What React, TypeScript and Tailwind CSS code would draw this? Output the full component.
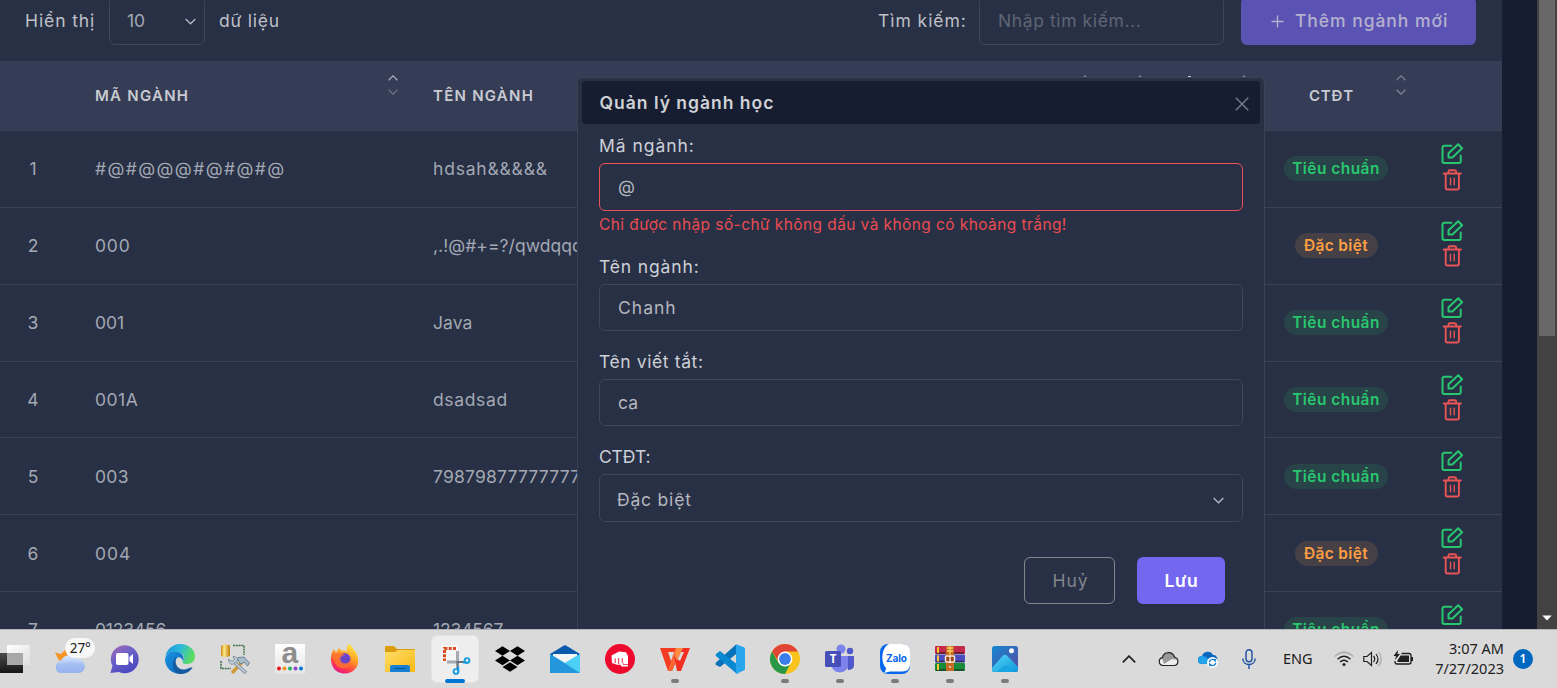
import type { ReactNode } from "react";
import { SiDropbox } from "react-icons/si";

type Program = "standard" | "special";

const rows: { code: string; name: string; program: Program; spacing: string; nameSpacing: string }[] = [
  { code: "#@#@@@#@#@#@", name: "hdsah&&&&&", program: "standard", spacing: "tracking-[1.4px]", nameSpacing: "tracking-[0.8px]" },
  { code: "000", name: ",.!@#+=?/qwdqqdwq", program: "special", spacing: "tracking-[0.8px]", nameSpacing: "tracking-[0.05px]" },
  { code: "001", name: "Java", program: "standard", spacing: "tracking-[0px]", nameSpacing: "tracking-[0.1px]" },
  { code: "001A", name: "dsadsad", program: "standard", spacing: "tracking-[0.5px]", nameSpacing: "tracking-[0.650px]" },
  { code: "003", name: "79879877777777", program: "standard", spacing: "tracking-[0.3px]", nameSpacing: "tracking-[0.200px]" },
  { code: "004", name: "", program: "special", spacing: "tracking-[0.9px]", nameSpacing: "tracking-normal" },
  { code: "0123456", name: "1234567", program: "standard", spacing: "tracking-[-0.200px]", nameSpacing: "tracking-[-0.150px]" },
];

const Chevron = ({ up = false, className = "" }: { up?: boolean; className?: string }) => (
  <svg viewBox="0 0 10 6" className={className} fill="none" stroke="currentColor" strokeWidth="1.2">
    <path d={up ? "M.6 5.2 5 .9l4.400 4.300" : "M.6.8 5 5.100 9.400.8"} />
  </svg>
);

const Sort = ({ top = "text-[#7d8190]", bottom = "text-[#858997]" }: { top?: string; bottom?: string }) => (
  <span className="flex w-[10px] shrink-0 flex-col gap-2 self-start pt-[14px]">
    <Chevron up className={"h-[6px] w-[10px] " + top} />
    <Chevron className={"h-[6px] w-[10px] " + bottom} />
  </span>
);

const EditIcon = () => (
  <svg viewBox="0 0 24 24" className="size-6" fill="none" stroke="#28c76f" strokeWidth="2" strokeLinejoin="round" strokeLinecap="round">
    <path d="M11.300 3.700H4.200A1.700 1.700 0 0 0 2.500 5.400V19.300A1.700 1.700 0 0 0 4.200 21H19A1.700 1.700 0 0 0 20.700 19.300V13.500" />
    <path d="M8.500 11.300 18.200 2.300 22.100 6.200 12.400 15.500H8.500Z" />
  </svg>
);

const TrashIcon = () => (
  <svg viewBox="0 0 24 24" className="size-6" fill="none" stroke="#ea5455" strokeWidth="1.9" strokeLinejoin="round" strokeLinecap="round">
    <path d="M3.700 5.500H20.900M8.500 5.300V3.600Q8.500 2.300 9.800 2.300H14.800Q16.100 2.300 16.100 3.600V5.300M5.700 5.700V19.700Q5.700 21.500 7.500 21.500H17.100Q18.900 21.500 18.900 19.700V5.700" />
    <path d="M10.500 10.200V16.800M14.200 10.200V16.800" strokeWidth="1.4" />
  </svg>
);

function ProgramBadge({ program }: { program: Program }) {
  return program === "standard" ? (
    <span className="flex h-[25px] w-[104px] items-center justify-center rounded-full bg-[#284448] text-[15.400px] font-semibold tracking-[0.5px] text-[#28c76f]">
      Tiêu chuẩn
    </span>
  ) : (
    <span className="flex h-[25px] w-[83px] items-center justify-center rounded-full bg-[#453f46] text-[15.400px] font-semibold tracking-[0.400px] text-[#ff9f43]">
      Đặc biệt
    </span>
  );
}

function Toolbar() {
  return (
    <div className="flex h-[61px] shrink-0 items-start pl-[25px] text-[17.500px] text-[#bfc1c7]">
      <span className="w-[84px] pt-[9px] leading-6 tracking-[0.900px]">Hiển thị</span>
      <div className="-mt-[3px] flex h-12 w-[96px] items-center justify-between rounded-md border border-[#404656] pr-[8px] pl-[17px] text-[#a3a8b2]">
        <span>10</span>
        <Chevron className="h-[7px] w-[11px] text-[#b4b7c0]" />
      </div>
      <span className="pt-[9px] pl-[14px] leading-6 tracking-[0.750px]">dữ liệu</span>
      <span className="ml-auto w-[101px] pt-[9px] leading-6 tracking-[0.950px]">Tìm kiếm:</span>
      <div className="-mt-[3px] flex h-12 w-[245px] items-center rounded-md border border-[#404656] pl-[18px] tracking-[0.600px] text-[#5f6575]">
        Nhập tìm kiếm...
      </div>
      <div className="-mt-[3px] mr-[26px] ml-[17px] flex h-12 w-[235px] items-center rounded-md bg-[#5b53b4] pl-[30px] font-medium text-[#b4b1cf]">
        <svg viewBox="0 0 13 13" className="mr-[11px] size-[13px]" stroke="currentColor" strokeWidth="1.400">
          <path d="M6.500.5v12M.5 6.500h12" />
        </svg>
        <span className="tracking-[0.950px]">Thêm ngành mới</span>
      </div>
    </div>
  );
}

function TableHead() {
  return (
    <div className="flex h-[70px] shrink-0 items-center border-b border-[#3b4253] bg-[#353c55] text-[15px] font-semibold tracking-[1.250px] text-[#c9cbd2]">
      <span className="w-[293px] pt-[2px] pl-[95px]">MÃ NGÀNH</span>
      <span className="w-[95px]" />
      <Sort top="text-[#aeb1bc]" bottom="text-[#6f7486]" />
      <span className="w-[682px] pt-[2px] pl-[35px]">TÊN NGÀNH</span>
      <Sort />
      <span className="w-[45px]" />
      <Sort />
      <span className="w-[43px]" />
      <span className="mt-[15px] h-[2px] w-[3px] self-start bg-[#c9cbd2]" />
      <span className="w-[48px]" />
      <Sort />
      <span className="w-[60px]" />
      <span className="w-[87px] pt-[2px] tracking-[0.8px]">CTĐT</span>
      <Sort />
    </div>
  );
}

function Table() {
  return (
    <div>
      <TableHead />
      {rows.map((row, i) => (
        <div key={row.code} className="flex h-[76.850px] items-center border-b border-[#3b4253] text-[17.500px] text-[#a3a8b2]">
          <span className="w-[66px] shrink-0 pt-px text-center">{i + 1}</span>
          <span className={"w-[367px] shrink-0 pt-px pl-[29px] " + row.spacing}>{row.code}</span>
          <span className={"w-[851px] shrink-0 pt-px " + row.nameSpacing}>{row.name}</span>
          <span className="flex w-[104px] shrink-0 justify-center">
            <ProgramBadge program={row.program} />
          </span>
          <span className="flex h-full w-[114px] shrink-0 flex-col items-center pt-[11px] pl-[14px]">
            <EditIcon />
            <span className="mt-[1.500px]">
              <TrashIcon />
            </span>
          </span>
        </div>
      ))}
    </div>
  );
}

const Label = ({ children, className }: { children: ReactNode; className: string }) => (
  <div className={"h-6 text-[17.500px] leading-6 text-[#ced0d6] " + className}>{children}</div>
);

function Dialog() {
  return (
    <div className="absolute top-[77px] left-[577px] h-[600px] w-[688px] rounded-md border border-[#3b4253] bg-[#283046] px-[4px] pt-[3px]">
      <div className="flex h-[43px] items-center justify-between rounded bg-[#161d31] pr-[11.500px] pl-[17.500px]">
        <h2 className="pt-[2px] text-[17.500px] font-semibold tracking-[1px] text-[#d0d2d6]">Quản lý ngành học</h2>
        <svg viewBox="0 0 14 14" className="mt-[3px] size-[14px]" stroke="#777c89" strokeWidth="1.400">
          <path d="m.8.8 12.400 12.400M13.200.8.8 13.200" />
        </svg>
      </div>
      <div className="px-[17px] text-[17.500px] text-[#b4b7bd]">
        <Label className="mt-[10px] tracking-[0.950px]">Mã ngành:</Label>
        <div className="mt-[5px] flex h-12 items-center rounded-md border border-[#ea5455] pt-px pl-[18px]">@</div>
        <p className="mt-[3px] h-[22px] text-[15.400px] leading-[22px] tracking-[0.470px] whitespace-nowrap text-[#ea4c50]">
          Chỉ được nhập số-chữ không dấu và không có khoảng trắng!
        </p>
        <Label className="mt-[19px] tracking-[0.850px]">Tên ngành:</Label>
        <div className="mt-[5px] flex h-[47px] items-center rounded-md border border-[#404656] pt-[2px] pl-[18px] tracking-[1px]">Chanh</div>
        <Label className="mt-[19px] tracking-[0.600px]">Tên viết tắt:</Label>
        <div className="mt-[5px] flex h-[47px] items-center rounded-md border border-[#404656] pt-[2px] pl-[18px] tracking-[0.200px]">ca</div>
        <Label className="mt-[19px] tracking-[-0.200px]">CTĐT:</Label>
        <div className="mt-[5px] flex h-12 items-center justify-between rounded-md border border-[#404656] pt-1 pr-[18px] pl-[17px] tracking-[0.800px]">
          <span className="pt-px">Đặc biệt</span>
          <Chevron className="h-[7px] w-[11px] text-[#b4b7c0]" />
        </div>
        <div className="mt-[35px] mr-[18px] flex justify-end gap-[22px]">
          <button className="h-[47px] w-[91px] rounded-md border border-[#82868b] pt-[2px] pl-[2px] text-[17.500px] tracking-[1px] text-[#82868b]">Huỷ</button>
          <button className="h-[47px] w-[88px] rounded-md bg-[#7367f0] pt-[2px] pl-px text-[17.500px] font-semibold tracking-[0.700px] text-white">Lưu</button>
        </div>
      </div>
    </div>
  );
}

function Scrollbar() {
  return (
    <div className="flex w-5 shrink-0 flex-col items-center justify-between bg-[#424242]">
      <div className="h-[336px] w-4 bg-[#686868]" />
      <svg viewBox="0 0 10 6" className="mb-[8px] h-[6px] w-[10px]">
        <path d="M.3.500h9.400L5 5.500Z" fill="#fff" />
      </svg>
    </div>
  );
}

const Icon = ({ children }: { children: ReactNode }) => (
  <svg viewBox="0 0 30 30" className="size-[30px] overflow-visible">
    {children}
  </svg>
);

const TaskView = () => (
  <Icon>
    <defs>
      <linearGradient id="tvd" x2="0" y2="1"><stop stopColor="#4a4a4a" /><stop offset="1" stopColor="#151515" /></linearGradient>
      <linearGradient id="tvl" x2="1" y2="1"><stop stopColor="#fff" /><stop offset="1" stopColor="#dedede" /></linearGradient>
    </defs>
    <path d="M0 9h22q1 0 1 1v19H0z" fill="url(#tvd)" />
    <rect x="7" y="1" width="23" height="20" rx="1" fill="url(#tvl)" />
    <path d="M7 9h16v12H7z" fill="#a8a8a8" />
  </Icon>
);

const Weather = () => (
  <Icon>
    <defs><linearGradient id="cl" x2="0" y2="1"><stop stopColor="#dce9ff" /><stop offset="1" stopColor="#769be6" /></linearGradient></defs>
    <path d="M0 8.500 6 10 11 5 13 15 4 16.500Z" fill="#f59324" />
    <path d="M6 29a6 6 0 0 1-.5-11.800A9.500 9.500 0 0 1 22 15.500 6.800 6.800 0 0 1 24 29Z" fill="url(#cl)" />
    <path d="M1 25c4-6 8-2 10-5 3-3 7-2 9 0 3-1 7 0 9 2 0 5-3 7-5 7H6c-3 0-5-2-5-4Z" fill="#a5bff2" opacity=".65" />
    <rect x="10" y="-6" width="30" height="20" rx="10" fill="#f8f8f8" />
    <text x="25.300" y="9" textAnchor="middle" fontSize="13.500" fontFamily="Noto Sans, sans-serif" fill="#222">27°</text>
  </Icon>
);

const Chat = () => (
  <Icon>
    <defs><linearGradient id="ch" x2=".6" y2="1"><stop stopColor="#a66bb5" /><stop offset=".5" stopColor="#6961c7" /><stop offset="1" stopColor="#4c48bf" /></linearGradient></defs>
    <path d="M.4 29 2.500 22A14 14 0 1 1 9 28Z" fill="url(#ch)" />
    <rect x="6" y="9" width="12.500" height="12" rx="2" fill="#fff" />
    <path d="m19.500 13 3.500-3v10l-3.500-3Z" fill="#fff" />
  </Icon>
);

const Edge = () => (
  <Icon>
    <defs>
      <linearGradient id="eg" x2="1" y2=".3"><stop stopColor="#168dd7" /><stop offset=".5" stopColor="#2bb7df" /><stop offset="1" stopColor="#5bdc63" /></linearGradient>
      <linearGradient id="eb" x2="1" y2="1"><stop stopColor="#1a94e2" /><stop offset="1" stopColor="#0b62b8" /></linearGradient>
    </defs>
    <path d="M.3 13A15 15 0 0 1 15 0c9 0 15 6 15 12 0 5-3 8-8 8-4 0-5-1-4-3 3-5-1-9-6-9C6 8 1 10 .3 13Z" fill="url(#eg)" />
    <path d="M0 15C1 10 6 7 12 8c5 0 8 5 6 9-2-6-8-5-8 3 0 6 6 9 9 9C9 32 0 25 0 15Z" fill="url(#eb)" />
    <path d="M12 12c-4 7 1 16 10 13 3-1 5-2 5.500-1.500C25 28 20 30 16 30 8 30 5 18 12 12Z" fill="#155a9f" />
  </Icon>
);

const Tools = () => (
  <Icon>
    <defs><linearGradient id="cy"><stop stopColor="#c98a10" /><stop offset=".35" stopColor="#ffe98a" /><stop offset="1" stopColor="#c07c0a" /></linearGradient></defs>
    <path d="M13 1.500h11V11M1 17v7.500h10" fill="none" stroke="#3f7046" strokeWidth="1.500" strokeDasharray="2 .8" />
    <path d="M1 1.500q4-2 9 0v10.500q-4 2-9 0Z" fill="url(#cy)" />
    <path d="m12 29 12-13" stroke="#d09a3a" strokeWidth="3.400" />
    <path d="m13 17 13 12" stroke="#8596a5" strokeWidth="3.600" />
    <path d="m13 17 12.500 11.500" stroke="#ccd7df" strokeWidth="1.200" />
    <path d="M8.500 15q0 5 4 5.500l5-4q0-4-4.500-4l1.500 3-2.500 2Z" fill="#c3d0da" stroke="#657887" strokeWidth=".7" />
    <path d="m18 13.500 6-.5 5.500 6-2 3-3.500-4-3 2-3-3Z" fill="#a9bccb" stroke="#5d7486" strokeWidth=".8" />
  </Icon>
);

const Alpha = () => (
  <Icon>
    <defs><linearGradient id="al" x2="0" y2="1"><stop stopColor="#fff" /><stop offset="1" stopColor="#e4e4e4" /></linearGradient></defs>
    <rect width="30" height="30" fill="url(#al)" />
    <text x="14.800" y="19" textAnchor="middle" fontSize="30" fontWeight="700" fontFamily="Liberation Sans, sans-serif" fill="#8e8e8e">a</text>
    {["#e81123", "#f7941d", "#20b26b", "#8e44d6", "#0078d4"].map((c, i) => (
      <circle key={c} cx={4 + i * 5.500} cy="24.500" r="2" fill={c} />
    ))}
  </Icon>
);

const Firefox = () => (
  <Icon>
    <defs>
      <linearGradient id="ff" x1=".8" x2=".3" y2="1"><stop stopColor="#fff04a" /><stop offset=".45" stopColor="#ff9b22" /><stop offset=".75" stopColor="#ff3f45" /><stop offset="1" stopColor="#e5168a" /></linearGradient>
    </defs>
    <path d="M19 0c4 3 4 5 6 7 3 4 5 12 1 17-6 8-19 7-23-1C-.5 16 1 9 4 5l2 4 3-5 3 3c2-1 4 0 5 1-1-3 0-6 2-8Z" fill="url(#ff)" />
    <circle cx="14.500" cy="15" r="6" fill="#7146d3" />
    <path d="M1 12C6 7 12 9 15 11l-2 2c-3 0-3 3-1 5 3 3 8 1 8-3 4 8-7 12-13 7Z" fill="#ff752d" opacity=".8" />
    <path d="M11 13q4-4 8 0 1 5-3 6c-5 0-6-3-5-6Z" fill="#6645ca" />
  </Icon>
);

const Folder = () => (
  <Icon>
    <defs><linearGradient id="fo" x2="1" y2="1"><stop stopColor="#ffdd6c" /><stop offset="1" stopColor="#f9b911" /></linearGradient></defs>
    <path d="M0 3q0-1 1-1h8l3 3h17q1 0 1 1v8H0Z" fill="#dc9c10" />
    <path d="M0 8h10l3-2h17v21q0 1-1 1H1q-1 0-1-1Z" fill="url(#fo)" />
    <path d="M5 28v-5q0-2 2-2h16q2 0 2 2v5Z" fill="#1681d4" />
    <path d="M9 24.500h12" stroke="#07559b" strokeWidth="1.200" />
  </Icon>
);

const Snip = () => (
  <Icon>
    <rect x="1" y="1" width="17" height="17" rx="1" fill="#f6f6f6" />
    <path d="M16 4.500H4.500V17" fill="none" stroke="#dc4b1d" strokeWidth="3" strokeDasharray="3 1.300" />
    <path d="M17.500 7v11M7 18h12" stroke="#a5abb0" strokeWidth="3" />
    <path d="M17.500 17v8M17 18h8" stroke="#64717a" strokeWidth="2.200" />
    <circle cx="16" cy="27.500" r="2.400" fill="none" stroke="#159bdf" strokeWidth="1.900" />
    <path d="M18.300 22.500v5" stroke="#159bdf" strokeWidth="1.900" />
    <circle cx="27" cy="16.500" r="2.400" fill="none" stroke="#159bdf" strokeWidth="1.900" />
    <path d="M23 18.500h4" stroke="#159bdf" strokeWidth="1.900" />
  </Icon>
);

const Mail = () => (
  <Icon>
    <path d="m0 10 14-8.500q1-.5 2 0L30 10v4H0Z" fill="#0b59ac" />
    <path d="M3 10h24v8L15 21 3 18Z" fill="#f5f5f5" />
    <path d="m0 10 15 9 15-9v19H0Z" fill="#35b8ec" />
    <path d="M0 10 30 29H0Z" fill="#2496dc" />
    <path d="m15 19 15-9v19Z" fill="#4cd0f5" />
  </Icon>
);

const Fist = () => (
  <Icon>
    <circle cx="15" cy="15" r="15" fill="#ed0a2d" />
    <path d="M6.500 11.500 14 7.500 21 8.300 23 12V22.500H16.500L15.500 20.800H12L7 19Z" fill="#fff" />
    <path d="M10.200 14.500V19M13.700 14V20M17.200 14V18.500L18.500 19.500" fill="none" stroke="#ed0a2d" strokeWidth=".9" />
    <path d="M18 20.500H23" stroke="#ed0a2d" strokeWidth=".7" />
  </Icon>
);

const Wps = () => (
  <Icon>
    <path d="M0 4h24l-2 4H8l3 9 3-6 3 4-5 12H8Z" fill="#f33b22" />
    <path d="M15 5h7l-10 22H8Z" fill="#ff6534" />
    <path d="m14 12 6 5 4-9h-5l2-4h9l-9 23h-4Z" fill="#f22f20" />
    <path d="M16 4h7l-6 13-2-5Z" fill="#ff8b45" />
  </Icon>
);

const VsCode = () => (
  <Icon>
    <path d="M1 18.500 21 .5l2 8L5 23 1 21q-1-1 0-2.500Z" fill="#0872b9" />
    <path d="M1 10 5 7l18 14-1 9L1 12Q0 11 1 10Z" fill="#0989d1" />
    <path d="m21 .2 8 3q1 .5 1 1.500v20q0 1-1 1.500l-7 3.500q-1 0-1-1V1Z" fill="#29a5ee" />
  </Icon>
);

const Chrome = () => (
  <Icon>
    <circle cx="15" cy="15" r="15" fill="#f9c31b" />
    <path d="M2 7.500A15 15 0 0 1 28 7.500H15L9 18Z" fill="#e04434" />
    <path d="M2 7.500 8.500 18.700Q12 22 21 18.500L15 30A15 15 0 0 1 2 7.500Z" fill="#289748" />
    <circle cx="15" cy="15" r="7.400" fill="#fff" />
    <circle cx="15" cy="15" r="5.900" fill="#3b7eea" />
  </Icon>
);

const Teams = () => (
  <Icon>
    <circle cx="25" cy="7" r="3.200" fill="#5059c9" />
    <path d="M20 12h9v10q-1 4-6 4Z" fill="#5059c9" />
    <circle cx="16" cy="5" r="4.500" fill="#7b83eb" />
    <path d="M9 12h14v9c0 9-14 10-16 2Z" fill="#7b83eb" />
    <rect y="7" width="16" height="16" rx="1.500" fill="#464eb8" />
    <text x="8" y="19" textAnchor="middle" fontSize="11.500" fontWeight="700" fontFamily="Open Sans, sans-serif" fill="#fff">T</text>
  </Icon>
);

const Zalo = () => (
  <Icon>
    <rect width="30" height="30" rx="8" fill="#0867ed" />
    <path d="M9 0h13q8 0 8 8v12q0 7.500-8 7.500H10L4 29q2-2 2-5C0 17 2 3 9 0Z" fill="#fff" />
    <text x="16.500" y="17.500" textAnchor="middle" fontSize="10" fontWeight="700" fontFamily="Inter, sans-serif" fill="#0868ed" textLength="21">Zalo</text>
  </Icon>
);

const WinRar = () => (
  <Icon>
    <rect y="2" width="30" height="8" rx="1" fill="#c42a4b" />
    <rect y="10.500" width="30" height="8" rx="1" fill="#4d4cbe" />
    <rect y="19" width="30" height="8" rx="1" fill="#188b38" />
    <path d="M1 9h28M1 17.500h28M1 26h28" stroke="#191e26" strokeWidth="1.400" opacity=".65" />
    <path d="M3 3v6M3 11.500v6M3 20v6" stroke="#ffc52d" strokeWidth="2" />
    <rect x="11" y="2" width="8" height="25" fill="#c56a20" />
    <path d="M15 2v9M12 4h6M12 7h6" stroke="#f6d25f" strokeWidth="1.300" />
    <rect x="10.500" y="12" width="9" height="6" rx="1" fill="#9b4814" stroke="#f3e8d5" strokeWidth="1.500" />
    <path d="M15 12v7M15 22v2" stroke="#fff" strokeWidth="1.200" />
  </Icon>
);

const Photos = () => (
  <Icon>
    <defs>
      <linearGradient id="pg" x2="1" y2="1"><stop stopColor="#1486d3" /><stop offset="1" stopColor="#5a4aa0" /></linearGradient>
      <linearGradient id="pm" x2="1" y2="1"><stop stopColor="#52d8f5" /><stop offset="1" stopColor="#1096dd" /></linearGradient>
    </defs>
    <rect x="2" y="2" width="26" height="26" rx="2.500" fill="url(#pg)" />
    <path d="M2 24 12.500 12q2.500-2.500 5 0L28 23v3q0 2-2 2H4q-2 0-2-2Z" fill="url(#pm)" />
    <path d="m7 28 7-6.500q1.500-1 3 0L24 28Z" fill="#19a5e2" />
    <circle cx="21.500" cy="6.700" r="2.500" fill="#f4f7fb" />
  </Icon>
);

const apps: { icon: ReactNode; running?: boolean; active?: boolean }[] = [
  { icon: <TaskView /> },
  { icon: <Weather /> },
  { icon: <Chat /> },
  { icon: <Edge /> },
  { icon: <Tools /> },
  { icon: <Alpha /> },
  { icon: <Firefox /> },
  { icon: <Folder /> },
  { icon: <Snip />, active: true },
  { icon: <SiDropbox className="size-[30px] text-black" /> },
  { icon: <Mail /> },
  { icon: <Fist /> },
  { icon: <Wps />, running: true },
  { icon: <VsCode /> },
  { icon: <Chrome />, running: true },
  { icon: <Teams />, running: true },
  { icon: <Zalo />, running: true },
  { icon: <WinRar />, running: true },
  { icon: <Photos />, running: true },
];

function Tray() {
  return (
    <div className="flex h-[57px] items-center text-[14.500px] text-[#202020] [font-family:'Noto_Sans',sans-serif]">
      <svg viewBox="0 0 14 8" className="mr-[22px] h-2 w-[14px]" fill="none" stroke="#202020" strokeWidth="1.700"><path d="m.8 7.300 6.200-6.200 6.200 6.200" /></svg>
      <svg viewBox="0 0 22 16" className="mr-[18px] h-4 w-[22px]">
        <path d="M5 14.500a4 4 0 0 1-.6-7.900A6.300 6.300 0 0 1 16.500 6a4.400 4.400 0 0 1 .2 8.500Z" fill="#eee" />
        <path d="M4 7A6.300 6.300 0 0 1 16.500 6L20 9l-6-1-8 5Z" fill="#999" />
        <path d="M5 14.500a4 4 0 0 1-.6-7.900A6.300 6.300 0 0 1 16.500 6a4.400 4.400 0 0 1 .2 8.500Z" fill="none" stroke="#222" strokeWidth="1.200" />
      </svg>
      <svg viewBox="0 0 20 18" className="mr-[24px] h-[18px] w-5">
        <path d="M4 14A4 4 0 0 1 4 6a6 6 0 0 1 11-1 4 4 0 0 1 3 7L13 14Z" fill="#0868bd" />
        <path d="M4 14a4 4 0 0 1 0-8q4 0 6 3l5 5Z" fill="#21a1ea" />
        <circle cx="14.500" cy="12.500" r="5.500" fill="#f7fbff" />
        <path d="M11.200 12a3.400 3.400 0 0 1 6-1.200V8.800M17.800 13a3.400 3.400 0 0 1-6 1.200v2" fill="none" stroke="#0878d0" strokeWidth="1.200" />
      </svg>
      <svg viewBox="0 0 14 20" className="mr-[27px] h-5 w-[14px]" fill="none" stroke="#1b4fa0" strokeWidth="1.400">
        <rect x="4" y=".8" width="6" height="12" rx="3" /><path d="M.8 9.500c0 8 12.400 8 12.400 0M7 15.500V20" />
      </svg>
      <span className="w-[51px]">ENG</span>
      <svg viewBox="0 0 20 16" className="mr-[9px] h-4 w-5" fill="none" stroke="#202020" strokeWidth="1.300">
        <path d="M.8 5.500Q10-3 19.200 5.500" stroke="#aaa" /><path d="M3.500 8.200q6.500-6 13 0M6 11q4-3.500 8 0" /><circle cx="10" cy="13.500" r="1.500" fill="#202020" stroke="none" />
      </svg>
      <svg viewBox="0 0 20 16" className="mr-[10px] h-4 w-5" fill="none" stroke="#202020" strokeWidth="1.200">
        <path d="M.8 5.500v5H4l4.500 4V1.500L4 5.500ZM10.500 5q2.500 3 0 6M13 3q4 5 0 10" /><path d="M15.500 1q5.500 7 0 14" stroke="#aaa" />
      </svg>
      <svg viewBox="0 0 20 16" className="mr-[21px] mb-[2px] h-4 w-5" fill="none" stroke="#202020" strokeWidth="1.300">
        <path d="M8.500 3.500H16q2 0 2 2V12q0 2-2 2H4q-2 0-2-2v-1" /><path d="M7.500 5.500H16V12H4.500V10.500Z" fill="#202020" stroke="none" /><path d="M5 0 .5 6H3L2 10 7 4H4.500ZM18 7h2v4h-2Z" fill="#202020" stroke="none" />
      </svg>
      <div className="mr-[9px] w-[70px] text-right leading-[19.500px] whitespace-nowrap">
        <div>3:07 AM</div>
        <div>7/27/2023</div>
      </div>
      <span className="mr-[24px] flex size-5 items-center justify-center rounded-full bg-[#0067c0] text-[12px] font-semibold text-white">1</span>
    </div>
  );
}

function Taskbar() {
  return (
    <div className="flex h-[59px] shrink-0 justify-between border-t border-[#b5b5ba] bg-[#dadada]">
      <div className="-ml-[12.500px] flex">
        {apps.map((app, i) => (
          <div key={i} className="relative flex h-[57px] w-[55px] items-center justify-center">
            <div className={app.active ? "flex size-12 items-center justify-center rounded-md border border-[#e4e4e4] bg-[#eeeeee]" : "flex size-12 items-center justify-center"}>
              {app.icon}
            </div>
            {app.active && <span className="absolute bottom-[4px] h-1 w-5 rounded-full bg-[#0078d4]" />}
            {app.running && <span className="absolute bottom-[4px] h-1 w-2 rounded-full bg-[#7b7b7b]" />}
          </div>
        ))}
      </div>
      <Tray />
    </div>
  );
}

export default function App() {
  return (
    <div className="flex h-[688px] w-[1557px] flex-col overflow-hidden font-['Inter',sans-serif]">
      <div className="flex h-[629px] shrink-0 bg-[#171d30]">
        <main className="relative h-[629px] w-[1502px] shrink-0 overflow-hidden bg-[#283046]">
          <Toolbar />
          <Table />
          <Dialog />
        </main>
        <div className="flex-1" />
        <Scrollbar />
      </div>
      <Taskbar />
    </div>
  );
}
